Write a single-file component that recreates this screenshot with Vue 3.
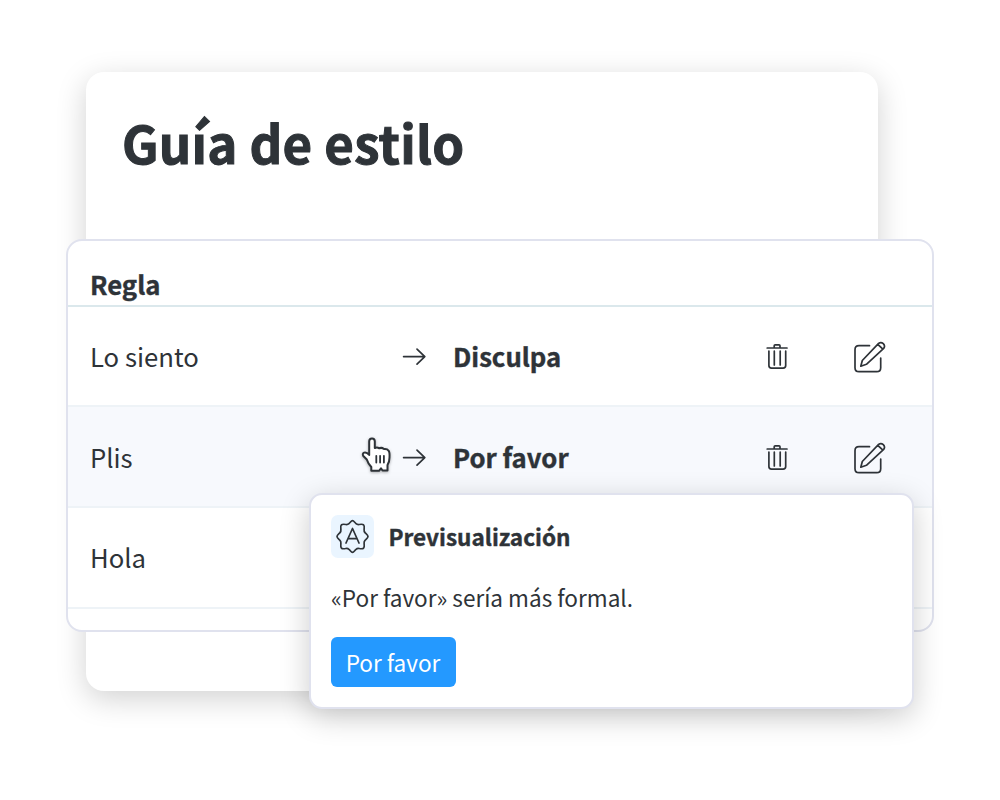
<script setup>
const rules = [
  { from: 'Lo siento', to: 'Disculpa', active: false },
  { from: 'Plis', to: 'Por favor', active: true },
  { from: 'Hola', to: '', active: false },
]
</script>

<template>
  <main class="stage">
    <section class="guide">
      <h1>Guía de estilo</h1>
    </section>

    <section class="table">
      <header class="head">Regla</header>
      <div v-for="rule in rules" :key="rule.from" class="row" :class="{ active: rule.active }">
        <span class="from">{{ rule.from }}</span>
        <template v-if="rule.to">
          <svg class="arrow" width="26" height="20" viewBox="0 0 26 20">
            <path d="M1.6 10.600H22.800M15 3.100L22.800 10.600L15 18.100" />
          </svg>
          <strong class="to">{{ rule.to }}</strong>
          <svg class="trash" width="26" height="30" viewBox="0 0 26 30">
            <path d="M3.200 7H23M10.200 6.800V4.800Q10.200 3.800 11.200 3.800H15Q16 3.800 16 4.800V6.800M4.900 10V24.600Q4.900 27.200 7.500 27.200H19.100Q21.700 27.200 21.700 24.600V10M10.300 10.200V24M16.200 10.200V24" />
          </svg>
          <svg class="edit" width="34" height="34" viewBox="0 0 34 34">
            <path d="M16.500 4.700H6Q2 4.700 2 8.700V26.700Q2 30.700 6 30.700H23.700Q27.700 30.700 27.700 26.700V17" />
            <path d="M7.800 25.200L9.300 19.500L25.600 2.400Q28 .500 30.300 2.700Q32.500 5 30.700 7.400L13.400 23.300ZM24.800 3.300L29.900 8.200" />
          </svg>
        </template>
      </div>
    </section>

    <svg class="hand" width="40" height="44" viewBox="0 0 40 44">
      <path d="M12.200 22V8.400Q12.200 5.600 15 5.600T17.800 8.400V15Q20 13.800 22.300 15.300Q24.600 14.200 27 16Q30 15.500 31.700 17.800Q32.800 19.500 32.500 24.500Q32.500 29 30.500 32V37.500H25.500L24 35.300L22 37.800H14.300V34Q11 30.500 9.800 26.500L6.300 23Q5 20.600 7.200 19.600Q9.800 19 12.200 22Z" />
      <path class="lines" d="M19.300 22.800V29.500M23.100 22.800V29.500M26.900 22.800V29.500" />
    </svg>

    <aside class="popup">
      <div class="popup-head">
        <span class="badge">
          <svg width="43" height="43" viewBox="0 0 43 43">
            <path d="M21.500 5.700C22.700 5.700 23.600 7.400 25 8.600Q26.200 9.700 28 9.500C30 9.200 31.700 8.900 32.600 9.900C33.600 10.800 33.300 12.600 33.100 14.500Q32.900 16.400 34 17.600C35.300 19 37 20.100 37 21.500C37 22.900 35.300 24 34 25.400Q32.900 26.600 33.100 28.500C33.300 30.400 33.600 32.200 32.600 33.100C31.700 34.100 30 33.800 28 33.500Q26.200 33.300 25 34.400C23.600 35.600 22.700 37.300 21.500 37.300C20.300 37.300 19.400 35.600 18 34.400Q16.800 33.300 15 33.500C13 33.800 11.300 34.100 10.400 33.100C9.400 32.200 9.700 30.400 9.900 28.500Q10.100 26.600 9 25.400C7.700 24 6 22.900 6 21.500C6 20.100 7.700 19 9 17.600Q10.100 16.400 9.900 14.500C9.700 12.600 9.400 10.800 10.400 9.900C11.300 8.900 13 9.200 15 9.500Q16.800 9.700 18 8.600C19.400 7.400 20.300 5.700 21.500 5.700Z" />
            <path d="M15 28L21.500 13.500L28 28M17.200 23.600H25.800" />
          </svg>
        </span>
        <strong>Previsualización</strong>
      </div>
      <p>«Por favor» sería más formal.</p>
      <button>Por favor</button>
    </aside>
  </main>
</template>

<style>
body {
  margin: 0;
  background: #fff;
}
</style>

<style scoped>
.stage {
  position: relative;
  width: 1000px;
  height: 800px;
  overflow: hidden;
  background: #fff;
  color: #2e3338;
  font-family: "Noto Sans CJK SC", "Noto Sans", sans-serif;
}
svg {
  display: block;
  fill: none;
  stroke: #2e3338;
  stroke-width: 1.7;
  stroke-linecap: round;
  stroke-linejoin: round;
}
.guide {
  position: absolute;
  left: 86px;
  top: 72px;
  width: 792px;
  height: 619px;
  box-sizing: border-box;
  padding: 30px 36px;
  border-radius: 18px;
  background: #fff;
  box-shadow: 0 8px 30px rgba(0, 0, 0, 0.18);
}
h1 {
  margin: 0;
  font-size: 51px;
  line-height: 80px;
  font-weight: 700;
  letter-spacing: 0.25px;
  -webkit-text-stroke: 1px #2e3338;
  white-space: nowrap;
}
.table {
  position: absolute;
  left: 66px;
  top: 239px;
  width: 868px;
  height: 393px;
  box-sizing: border-box;
  border: 2px solid #e0e2ee;
  border-radius: 16px;
  background: #fff;
  overflow: hidden;
}
.head {
  box-sizing: border-box;
  height: 66px;
  padding: 23px 22px 0;
  border-bottom: 2px solid #dbe8ec;
  font-size: 25.7px;
  line-height: 40px;
  font-weight: 700;
  -webkit-text-stroke: 0.4px #2e3338;
}
.row {
  display: grid;
  grid-template-columns: 312px 51px 311px 89px auto;
  align-items: center;
  box-sizing: border-box;
  height: 101px;
  padding-left: 22px;
  border-bottom: 2px solid #eef3f7;
  font-size: 25.7px;
  line-height: 40px;
}
.head + .row {
  height: 100px;
}
.row:last-child .from {
  margin-top: -2px;
}
.row.active {
  background: #f7f9fd;
}
.to,
.popup-head strong {
  -webkit-text-stroke: 0.4px #2e3338;
}
.edit {
  margin-top: 4px;
}
.hand {
  position: absolute;
  left: 357px;
  top: 433px;
  fill: #fff;
  stroke-width: 2;
  filter: drop-shadow(0 1px 1.5px rgba(0, 0, 0, 0.3));
}
.lines {
  stroke-width: 1.8;
}
.popup {
  position: absolute;
  left: 309px;
  top: 493px;
  width: 605px;
  height: 216px;
  box-sizing: border-box;
  padding: 20px;
  border: 2px solid #e0e2ee;
  border-radius: 13px;
  background: #fff;
  box-shadow: 0 8px 30px rgba(0, 0, 0, 0.2);
}
.popup-head {
  display: flex;
  align-items: center;
  gap: 14.5px;
  height: 43px;
  font-size: 22.55px;
  line-height: 34px;
}
.popup-head strong {
  margin-top: -1px;
}
.badge {
  width: 43px;
  height: 43px;
  border-radius: 7px;
  background: #eaf5ff;
}
p {
  margin: 22px 0 23px;
  font-size: 22.55px;
  line-height: 34px;
}
button {
  display: block;
  width: 125px;
  height: 50px;
  padding: 0 1px 0 0;
  border: 0;
  border-radius: 6px;
  background: #2499ff;
  color: #fff;
  font: 400 22.55px/48px "Noto Sans CJK SC", sans-serif;
  text-align: center;
}
</style>
